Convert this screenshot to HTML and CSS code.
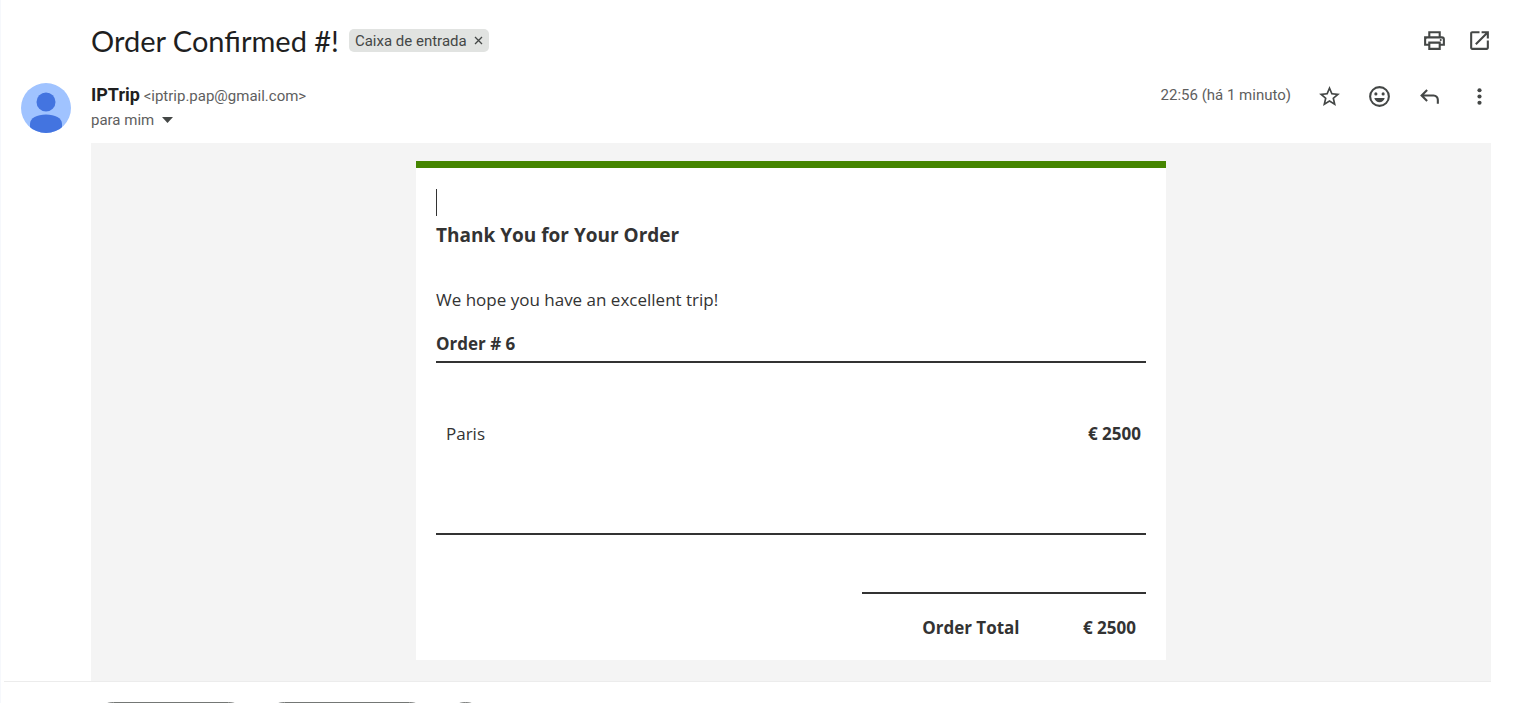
FILE: index.html
```html
<!DOCTYPE html>
<html lang="pt">
<head>
    <meta charset="UTF-8">
    <meta name="viewport" content="width=device-width, initial-scale=1.0">
    <title>Order Confirmed #!</title>
    <link rel="stylesheet" href="styles.css">
</head>
<body>
    <main class="mail">
        <header class="subject">
            <h1>Order Confirmed #!</h1>
            <span class="label">Caixa de entrada
                <button class="label-remove" aria-label="Remover">
                    <svg width="9" height="9" viewBox="0 0 9 9"><path d="M1 1l7 7M8 1l-7 7" stroke="#444746" stroke-width="1.3"/></svg>
                </button>
            </span>
            <div class="subject-tools">
                <button class="icon" aria-label="Imprimir">
                    <svg width="25" height="25" viewBox="0 0 24 24"><path d="M19 8h-1V3H6v5H2v9h4v4h12v-4h4V11q0-3-3-3zM8 5h8v3H8V5zm8 14H8v-4h8v4zm2-4v-2H6v2H4v-4q0-1 1-1h14q1 0 1 1v4h-2z"/><circle cx="18" cy="11.500" r="1"/></svg>
                </button>
                <button class="icon" aria-label="Abrir em nova janela">
                    <svg width="25" height="25" viewBox="0 0 24 24"><path d="M19 19H5V5h7V3H5c-1.110 0-2 .900-2 2v14c0 1.100.890 2 2 2h14c1.100 0 2-.900 2-2v-7h-2v7zM14 3v2h3.590l-9.830 9.830 1.410 1.410L19 6.410V10h2V3h-7z"/></svg>
                </button>
            </div>
        </header>

        <section class="sender">
            <svg class="avatar" viewBox="0 0 50 50">
                <defs><clipPath id="round"><circle cx="25" cy="25" r="25"/></clipPath></defs>
                <g clip-path="url(#round)">
                    <rect width="50" height="50" fill="#a0c3ff"/>
                    <circle cx="25" cy="19" r="9.500" fill="#4374e0"/>
                    <path d="M9 50V41C9 35 16 31.500 25 31.500S41 35 41 41V50z" fill="#4374e0"/>
                </g>
            </svg>
            <div class="from">
                <p class="from-name"><strong>IPTrip</strong> <span>&lt;iptrip.pap@gmail.com&gt;</span></p>
                <button class="from-to">para mim
                    <svg width="11" height="6" viewBox="0 0 11 6"><path d="M0 0h11L5.500 6z" fill="#444746"/></svg>
                </button>
            </div>
            <span class="date">22:56 (há 1 minuto)</span>
            <div class="sender-tools">
                <button class="icon" aria-label="Com estrela">
                    <svg width="25" height="25" viewBox="0 0 24 24"><path d="M22 9.240l-7.190-.620L12 2 9.190 8.630 2 9.240l5.460 4.730L5.820 21 12 17.270 18.180 21l-1.630-7.030L22 9.240zM12 15.400l-3.760 2.270 1-4.280-3.320-2.880 4.380-.380L12 6.100l1.710 4.040 4.380.380-3.320 2.880 1 4.280L12 15.400z"/></svg>
                </button>
                <button class="icon" aria-label="Adicionar reação">
                    <svg width="25" height="25" viewBox="0 0 24 24"><path d="M12 2a10 10 0 1 0 0 20 10 10 0 0 0 0-20zm0 18a8 8 0 1 1 0-16 8 8 0 0 1 0 16z"/><circle cx="8.500" cy="9.500" r="1.500"/><circle cx="15.500" cy="9.500" r="1.500"/><path d="M7 13.500h10c-.600 2.500-2.500 4-5 4s-4.400-1.500-5-4z"/></svg>
                </button>
                <button class="icon" aria-label="Responder">
                    <svg width="25" height="25" viewBox="0 0 24 24"><path d="M19 19v-4q0-1.250-.875-2.125T16 12H6.830l3.580 3.580L9 17l-6-6 6-6 1.410 1.420L6.830 10H16q2.075 0 3.538 1.463T21 15v4h-2z"/></svg>
                </button>
                <button class="icon" aria-label="Mais">
                    <svg width="25" height="25" viewBox="0 0 24 24"><circle cx="12" cy="6" r="2"/><circle cx="12" cy="12" r="2"/><circle cx="12" cy="18" r="2"/></svg>
                </button>
            </div>
        </section>

        <div class="message">
            <article class="order">
                <div class="logo"></div>
                <h2>Thank You for Your Order</h2>
                <p>We hope you have an excellent trip!</p>
                <h3>Order # 6</h3>
                <table class="items">
                    <tr>
                        <td>Paris</td>
                        <td class="price">€ 2500</td>
                    </tr>
                </table>
                <table class="total">
                    <tr>
                        <th scope="row">Order Total</th>
                        <td class="price">€ 2500</td>
                    </tr>
                </table>
            </article>
        </div>

        <footer class="actions">
            <button class="reply" aria-label="Responder"></button>
            <button class="forward" aria-label="Encaminhar"></button>
            <button class="react" aria-label="Adicionar reação"></button>
        </footer>
    </main>
</body>
</html>
```

FILE: styles.css
```css
* {
    box-sizing: border-box;
}

body {
    margin: 0;
    height: 100vh;
    overflow: hidden;
    background-color: #fff;
    border-left: 1px solid #f6f8fc;
    font-family: Roboto, Arial, sans-serif;
    font-size: 15px;
    color: #5e5e5e;
}

h1, h2, h3, p {
    margin: 0;
}

button {
    padding: 0;
    border: none;
    background: none;
    font: inherit;
    color: inherit;
    cursor: pointer;
}

svg {
    display: block;
}

.mail {
    padding: 20px 25px 0 0;
}

/* subject line */
.subject {
    display: flex;
    align-items: center;
    height: 41px;
    padding-left: 90px;
}
.subject h1 {
    font-family: Lato, sans-serif;
    font-size: 29px;
    font-weight: 400;
    line-height: 34px;
    color: #1f1f1f;
}
.label {
    display: flex;
    align-items: center;
    gap: 7px;
    height: 23px;
    margin-left: 10px;
    padding: 0 6px;
    border-radius: 5px;
    background-color: #e1e3e1;
    color: #444746;
}
.subject-tools {
    display: flex;
    gap: 20px;
    margin-left: auto;
}
.icon svg {
    fill: #444746;
}

/* sender */
.sender {
    display: flex;
    height: 82px;
    padding: 22px 0 0 20px;
}
.avatar {
    width: 50px;
    height: 50px;
    margin-right: 20px;
}
.from-name {
    line-height: 24px;
}
.from-name strong {
    font-size: 18px;
    color: #1f1f1f;
}
.from-to {
    display: flex;
    align-items: center;
    gap: 8px;
    line-height: 24px;
}
.date {
    margin-left: auto;
    line-height: 24px;
}
.sender-tools {
    display: flex;
    align-items: flex-start;
    gap: 25px;
    margin-left: 26px;
    padding-top: 1px;
}

/* message body */
.message {
    margin: 0 1px 0 90px;
    padding: 18px 0 21px;
    background-color: #f4f4f4;
}
.order {
    max-width: 750px;
    margin: 0 auto;
    padding: 21px 20px 20px;
    border-top: 7px solid #458500;
    background-color: #fff;
    font-family: "Open Sans", "Segoe UI", sans-serif;
    font-size: 17px;
    line-height: 24px;
    color: #333;
}
.logo {
    height: 27px;
    border-left: 1px solid #333;
}
.order h2 {
    margin-top: 7px;
    font-size: 19px;
}
.order p {
    margin-top: 41px;
}
.order h3 {
    margin-top: 20px;
    padding-bottom: 5px;
    border-bottom: 2px solid #333;
    font-size: 17px;
}
.order table {
    border-collapse: separate;
    border-spacing: 0;
}
.items {
    width: 100%;
    border-bottom: 2px solid #333;
}
.items td {
    padding: 59px 5px 87px 10px;
}
.price {
    font-weight: bold;
    text-align: right;
}
.total {
    width: 40%;
    margin: 57px 0 0 auto;
    border-top: 2px solid #333;
}
.total th,
.total td {
    padding: 22px 10px 0 0;
    text-align: right;
}
.total th {
    width: 59%;
}

/* reply buttons */
.actions {
    display: flex;
    gap: 11px;
    margin: 0 1px 0 3px;
    padding: 20px 0 0 87px;
    border-top: 1px solid #ececec;
}
.actions button {
    height: 45px;
    border: 1px solid #747775;
    border-radius: 23px;
}
.reply {
    width: 160px;
}
.forward {
    width: 170px;
}
.react {
    width: 45px;
}
```
